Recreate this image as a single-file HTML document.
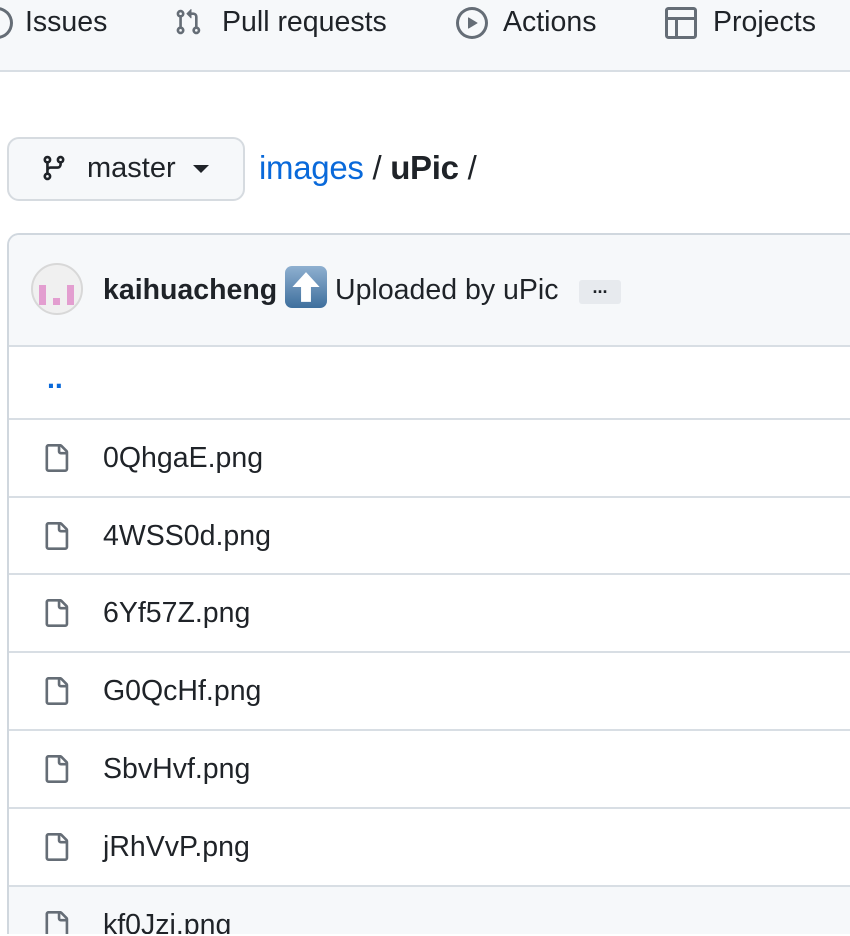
<!DOCTYPE html>
<html style="overflow:hidden;height:936px"><head><meta charset="utf-8"><style>
body{margin:0;width:850px;height:936px;overflow:hidden;background:#fff;font-family:"Liberation Sans",Arial,sans-serif;color:#1f2328;position:relative}
.hdr{position:absolute;left:0;top:0;width:850px;height:70px;background:#f6f8fa;border-bottom:2px solid #d8dee4}
.nav{position:absolute;top:5px;font-size:28.5px;line-height:34px;white-space:nowrap}
.ic{position:absolute}
.abs{position:absolute}
.btn{left:7px;top:137px;width:234px;height:60px;border:2px solid #d6dbe0;border-radius:12px;background:#f6f8fa}
.box{left:7px;top:233px;width:900px;height:699px;border:2px solid #d0d7de;border-bottom:none;border-radius:12px 12px 0 0;overflow:hidden}
.row{position:absolute;left:0;width:900px;border-top:2px solid #d8dee4;font-size:28.5px}
.row span{position:absolute;left:94px;white-space:nowrap}
.row svg{position:absolute;left:33px}
</style></head><body>
<div class="hdr"></div>
<svg class="ic" style="left:-19px;top:7px" width="32" height="32" viewBox="0 0 16 16"><path fill="#656d76" d="M8 0a8 8 0 110 16A8 8 0 018 0zM1.5 8a6.5 6.5 0 1013 0 6.5 6.5 0 00-13 0z"/></svg>
<div class="nav" style="left:25px">Issues</div>
<svg class="ic" style="left:174px;top:8px" width="28" height="28" viewBox="0 0 16 16"><path fill="#656d76" d="M1.5 3.25a2.25 2.25 0 113 2.122v5.256a2.251 2.251 0 11-1.5 0V5.372A2.25 2.25 0 011.5 3.25zm5.677-.177L9.573.677A.25.25 0 0110 .854V2.5h1A2.5 2.5 0 0113.5 5v5.628a2.251 2.251 0 11-1.5 0V5a1 1 0 00-1-1h-1v1.646a.25.25 0 01-.427.177L7.177 3.427a.25.25 0 010-.354zM3.75 2.5a.75.75 0 100 1.5.75.75 0 000-1.5zm0 9.5a.75.75 0 100 1.5.75.75 0 000-1.5zm8.25.75a.75.75 0 101.5 0 .75.75 0 00-1.5 0z"/></svg>
<div class="nav" style="left:222px">Pull requests</div>
<svg class="ic" style="left:456px;top:7px" width="32" height="32" viewBox="0 0 16 16"><path fill="#656d76" d="M8 0a8 8 0 110 16A8 8 0 018 0zM1.5 8a6.5 6.5 0 1013 0 6.5 6.5 0 00-13 0zm4.879-2.773l4.264 2.559a.25.25 0 010 .428l-4.264 2.559A.25.25 0 016 10.559V5.442a.25.25 0 01.379-.215z"/></svg>
<div class="nav" style="left:503px">Actions</div>
<svg class="ic" style="left:665px;top:7px" width="32" height="32" viewBox="0 0 16 16"><path fill="#656d76" d="M1.75 0h12.5C15.216 0 16 .784 16 1.75v12.5A1.75 1.75 0 0114.25 16H1.75A1.75 1.75 0 010 14.25V1.75C0 .784.784 0 1.75 0zM1.5 6.5v7.75c0 .138.112.25.25.25H5v-8zm5 8h7.75a.25.25 0 00.25-.25V6.5h-8zM14.5 5V1.75a.25.25 0 00-.25-.25H1.75a.25.25 0 00-.25.25V5z"/></svg>
<div class="nav" style="left:713px">Projects</div>

<div class="abs btn"></div>
<svg class="abs" style="left:40px;top:153px" width="28" height="30" viewBox="0 0 16 16"><path fill="#1f2328" d="M9.5 3.25a2.25 2.25 0 113 2.122V6A2.5 2.5 0 0110 8.5H6a1 1 0 00-1 1v1.128a2.251 2.251 0 11-1.5 0V5.372a2.25 2.25 0 111.5 0v1.836A2.493 2.493 0 016 7h4a1 1 0 001-1v-.628A2.25 2.25 0 019.5 3.25zm-6 0a.75.75 0 101.5 0 .75.75 0 00-1.5 0zm8.25-.75a.75.75 0 100 1.5.75.75 0 000-1.5zM4.25 12a.75.75 0 100 1.5.75.75 0 000-1.5z"/></svg>
<div class="abs" style="left:87px;top:150px;font-size:29px;line-height:36px">master</div>
<svg class="abs" style="left:193px;top:165px" width="16" height="9"><path d="M0 0h16L8 8z" fill="#1f2328"/></svg>
<div class="abs" style="left:259px;top:149px;font-size:33px;line-height:38px;white-space:nowrap;letter-spacing:-0.3px"><span style="color:#0969da">images</span> / <b>uPic</b> /</div>

<div class="abs box">
<div style="position:absolute;left:0;top:0;width:900px;height:110px;background:#f6f8fa"></div>
<div style="position:absolute;left:22px;top:28px;width:48px;height:48px;border-radius:50%;background:#f0f0f0;border:2px solid #d8d8d8;overflow:hidden">
<div style="position:absolute;left:6px;top:20px;width:7px;height:20px;background:#e39ed0"></div>
<div style="position:absolute;left:20px;top:33px;width:7px;height:7px;background:#e39ed0"></div>
<div style="position:absolute;left:34px;top:20px;width:7px;height:20px;background:#e39ed0"></div>
</div>
<div style="position:absolute;left:94px;top:31px;font-size:28.5px;line-height:34px;white-space:nowrap"><b>kaihuacheng</b> <span style="display:inline-block;width:42px;height:42px;vertical-align:-9px;border-radius:7px;background:linear-gradient(#8fb0d0,#3e6f9d);position:relative"><svg width="42" height="42" viewBox="0 0 34 34" style="position:absolute;left:0;top:0"><path d="M17 5 L28 17 H21 V29 H13 V17 H6Z" fill="#fff"/></svg></span> Uploaded by uPic</div>
<div style="position:absolute;left:570px;top:45px;width:42px;height:24px;background:#e7eaee;border-radius:3px;font-size:18px;text-align:center;line-height:14px;font-weight:bold">...</div>
<div class="row" style="top:110px;height:73px"><span style="left:38px;top:16px;color:#0969da;font-weight:bold">..</span></div>
<div class="row" style="top:183px;height:76px"><svg style="top:23px" width="28" height="30" viewBox="0 0 16 16"><path fill="#656d76" d="M2 1.75C2 .784 2.784 0 3.75 0h6.586c.464 0 .909.184 1.237.513l2.914 2.914c.329.328.513.773.513 1.237v9.586A1.75 1.75 0 0113.25 16h-9.5A1.75 1.75 0 012 14.25zm1.75-.25a.25.25 0 00-.25.25v12.5c0 .138.112.25.25.25h9.5a.25.25 0 00.25-.25V6h-2.75A1.75 1.75 0 019 4.25V1.5zm6.75.062V4.25c0 .138.112.25.25.25h2.688l-.011-.013-2.914-2.914z"/></svg><span style="top:22px">0QhgaE.png</span></div>
<div class="row" style="top:261px;height:75px"><svg style="top:23px" width="28" height="30" viewBox="0 0 16 16"><path fill="#656d76" d="M2 1.75C2 .784 2.784 0 3.75 0h6.586c.464 0 .909.184 1.237.513l2.914 2.914c.329.328.513.773.513 1.237v9.586A1.75 1.75 0 0113.25 16h-9.5A1.75 1.75 0 012 14.25zm1.750-.25a.25.25 0 00-.25.25v12.5c0 .138.112.25.25.25h9.5a.25.25 0 00.25-.25V6h-2.75A1.75 1.75 0 019 4.25V1.5zm6.75.062V4.25c0 .138.112.25.25.25h2.688l-.011-.013-2.914-2.914z"/></svg><span style="top:22px">4WSS0d.png</span></div>
<div class="row" style="top:338px;height:76px"><svg style="top:23px" width="28" height="30" viewBox="0 0 16 16"><path fill="#656d76" d="M2 1.75C2 .784 2.784 0 3.75 0h6.586c.464 0 .909.184 1.237.513l2.914 2.914c.329.328.513.773.513 1.237v9.586A1.75 1.75 0 0113.25 16h-9.5A1.75 1.75 0 012 14.25zm1.75-.25a.25.25 0 00-.25.25v12.5c0 .138.112.25.25.25h9.5a.25.25 0 00.25-.25V6h-2.75A1.75 1.75 0 019 4.25V1.5zm6.75.062V4.25c0 .138.112.25.25.25h2.688l-.011-.013-2.914-2.914z"/></svg><span style="top:22px">6Yf57Z.png</span></div>
<div class="row" style="top:416px;height:76px"><svg style="top:23px" width="28" height="30" viewBox="0 0 16 16"><path fill="#656d76" d="M2 1.75C2 .784 2.784 0 3.75 0h6.586c.464 0 .909.184 1.237.513l2.914 2.914c.329.328.513.773.513 1.237v9.586A1.75 1.75 0 0113.25 16h-9.5A1.75 1.75 0 012 14.25zm1.75-.25a.25.25 0 00-.25.25v12.5c0 .138.112.25.25.25h9.5a.25.25 0 00.25-.25V6h-2.75A1.75 1.75 0 019 4.25V1.5zm6.75.062V4.25c0 .138.112.25.25.25h2.688l-.011-.013-2.914-2.914z"/></svg><span style="top:22px">G0QcHf.png</span></div>
<div class="row" style="top:494px;height:76px"><svg style="top:23px" width="28" height="30" viewBox="0 0 16 16"><path fill="#656d76" d="M2 1.75C2 .784 2.784 0 3.75 0h6.586c.464 0 .909.184 1.237.513l2.914 2.914c.329.328.513.773.513 1.237v9.586A1.75 1.75 0 0113.25 16h-9.5A1.75 1.75 0 012 14.25zm1.75-.25a.25.25 0 00-.25.25v12.5c0 .138.112.25.25.25h9.5a.25.25 0 00.25-.25V6h-2.75A1.75 1.75 0 019 4.25V1.5zm6.75.062V4.25c0 .138.112.25.25.25h2.688l-.011-.013-2.914-2.914z"/></svg><span style="top:22px">SbvHvf.png</span></div>
<div class="row" style="top:572px;height:76px"><svg style="top:23px" width="28" height="30" viewBox="0 0 16 16"><path fill="#656d76" d="M2 1.75C2 .784 2.784 0 3.75 0h6.586c.464 0 .909.184 1.237.513l2.914 2.914c.329.328.513.773.513 1.237v9.586A1.75 1.75 0 0113.25 16h-9.5A1.75 1.75 0 012 14.25zm1.75-.25a.25.25 0 00-.25.25v12.5c0 .138.112.25.25.25h9.5a.25.25 0 00.25-.25V6h-2.75A1.75 1.75 0 019 4.25V1.5zm6.75.062V4.25c0 .138.112.25.25.25h2.688l-.011-.013-2.914-2.914z"/></svg><span style="top:22px">jRhVvP.png</span></div>
<div class="row" style="top:650px;height:49px;background:#f6f8fa;overflow:hidden"><svg style="top:23px" width="28" height="30" viewBox="0 0 16 16"><path fill="#656d76" d="M2 1.75C2 .784 2.784 0 3.75 0h6.586c.464 0 .909.184 1.237.513l2.914 2.914c.329.328.513.773.513 1.237v9.586A1.75 1.75 0 0113.25 16h-9.5A1.75 1.75 0 012 14.25zm1.75-.25a.25.25 0 00-.25.25v12.5c0 .138.112.25.25.25h9.5a.25.25 0 00.25-.25V6h-2.75A1.75 1.75 0 019 4.25V1.5zm6.75.062V4.25c0 .138.112.25.25.25h2.688l-.011-.013-2.914-2.914z"/></svg><span style="top:22px">kf0Jzj.png</span></div>
</div>
</body></html>
